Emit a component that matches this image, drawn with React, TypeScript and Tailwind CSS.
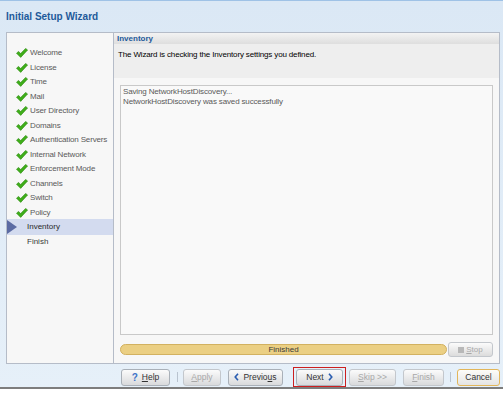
import React from "react";

const steps = [
  "Welcome",
  "License",
  "Time",
  "Mail",
  "User Directory",
  "Domains",
  "Authentication Servers",
  "Internal Network",
  "Enforcement Mode",
  "Channels",
  "Switch",
  "Policy",
];

function Check() {
  return (
    <svg width="12" height="10" viewBox="0 0 12 10" className="shrink-0">
      <path d="M0.5 5.2 L2.6 3.4 L4.6 5.6 L9.6 0.4 L11.6 2.0 L4.7 9.4 Z" fill="#3fae1a" stroke="#2b8a10" strokeWidth="0.6" />
    </svg>
  );
}

function Chevron({ left }: { left?: boolean }) {
  return (
    <svg width="5" height="8" viewBox="0 0 5 8" className="shrink-0">
      <path d={left ? "M4 0.8 L1.2 4 L4 7.2" : "M1 0.8 L3.8 4 L1 7.2"} fill="none" stroke="#2a5db0" strokeWidth="1.6" />
    </svg>
  );
}

function Btn({
  children,
  w,
  disabled,
  cancel,
}: {
  children: React.ReactNode;
  w: string;
  disabled?: boolean;
  cancel?: boolean;
}) {
  return (
    <div
      className={`${w} h-[17px] rounded-[3px] border flex items-center justify-center gap-[4px] text-[8.5px] bg-gradient-to-b ${
        cancel ? "border-[#e2b65a] from-[#fdfcf8] to-[#e4e4e4]" : "border-[#a9b0b8] from-[#fbfbfb] to-[#d9dadc]"
      } ${disabled ? "text-[#a8a8a8] border-[#c3c7cc]" : "text-[#333]"}`}
    >
      {children}
    </div>
  );
}

export default function App() {
  return (
    <div className="w-[503px] h-[399px] bg-white overflow-hidden" style={{ fontFamily: '"Liberation Sans", Arial, sans-serif' }}>
      <div className="h-[387px] border-t border-[#9fc2e6] bg-gradient-to-b from-[#dbe8f5] to-[#e6f0f9] flex flex-col">
        {/* Title */}
        <div className="h-[31px] pl-[6px] flex items-center text-[10px] font-bold text-[#1e5a9a]">Initial Setup Wizard</div>

        {/* Main panel */}
        <div className="ml-[6px] w-[494px] h-[332px] border border-[#b5bcc8] flex">
          {/* Steps */}
          <div className="w-[107px] bg-[#f7f7f7] border-r border-[#b5bcc8] pt-[13px] flex flex-col">
            {steps.map((s) => (
              <div key={s} className="h-[14.5px] flex items-center pl-[9px] gap-[2px] text-[8px] text-[#5a5a5a] whitespace-nowrap tracking-[-0.15px]">
                <Check />
                <span>{s}</span>
              </div>
            ))}
            <div className="h-[16px] -my-[0.75px] bg-[#d3dbef] flex items-center text-[8px] text-[#2a2a2a] font-medium">
              <svg width="11" height="14" viewBox="0 0 11 14" className="shrink-0">
                <path d="M0 0 L10 7 L0 14 Z" fill="#5b6ba3" />
              </svg>
              <span className="ml-[9px]">Inventory</span>
            </div>
            <div className="h-[14.5px] flex items-center pl-[20px] text-[8px] text-[#3a3a3a]">Finish</div>
          </div>

          {/* Content */}
          <div className="flex-1 flex flex-col bg-[#f7f7f7]">
            <div className="h-[11px] bg-gradient-to-b from-[#f3f3f3] to-[#dedede] pl-[3px] flex items-center text-[8px] font-bold text-[#1e5a9a]">Inventory</div>
            <div className="h-[34px] bg-[#eeeeee] pl-[4px] pt-[5px] text-[8px] text-black tracking-[-0.15px]">The Wizard is checking the Inventory settings you defined.</div>
            <div className="ml-[6px] mt-[7px] w-[373px] h-[250px] border border-[#c9c9c9] bg-[#f9f9f9] px-[2px] pt-[1px] text-[8px] leading-[9.5px] text-[#5a5a5a] tracking-[-0.15px]">
              <div>Saving NetworkHostDiscovery...</div>
              <div>NetworkHostDiscovery was saved successfully</div>
            </div>
            <div className="ml-[6px] mt-[7px] flex items-center">
              <div className="w-[327px] h-[11px] rounded-full border border-[#d2b160] bg-[#ebcf83] flex items-center justify-center text-[8px] text-[#3a3a3a]">Finished</div>
              <div className="ml-[1px] w-[45px] h-[15px] rounded-[3px] border border-[#c3c7cc] bg-gradient-to-b from-[#fbfbfb] to-[#dcdcdc] flex items-center justify-center gap-[2px] text-[8px] text-[#a8a8a8]">
                <span className="w-[6px] h-[6px] bg-[#b8b8b8]" />
                <span><u>S</u>top</span>
              </div>
            </div>
          </div>
        </div>

        {/* Buttons */}
        <div className="mt-[3px] pl-[121px] flex items-center h-[20px]">
          <Btn w="w-[49px]">
            <span className="text-[#3f74c8] font-bold text-[10px]">?</span>
            <span><u>H</u>elp</span>
          </Btn>
          <div className="ml-[7px] w-px h-[10px] bg-[#b9c3cf]" />
          <div className="ml-[5px]">
            <Btn w="w-[38px]" disabled>
              <span><u>A</u>pply</span>
            </Btn>
          </div>
          <div className="ml-[7px]">
            <Btn w="w-[55px]">
              <Chevron left />
              <span>Previo<u>u</u>s</span>
            </Btn>
          </div>
          <div className="ml-[10px] w-[53px] h-[20px] border border-[#cc1f1f] flex items-center justify-center">
            <Btn w="w-[47px]">
              <span>Next</span>
              <Chevron />
            </Btn>
          </div>
          <div className="ml-[3px]">
            <Btn w="w-[47px]" disabled>
              <span><u>S</u>kip &gt;&gt;</span>
            </Btn>
          </div>
          <div className="ml-[7px]">
            <Btn w="w-[41px]" disabled>
              <span><u>F</u>inish</span>
            </Btn>
          </div>
          <div className="ml-[6px] w-px h-[10px] bg-[#b9c3cf]" />
          <div className="ml-[6px]">
            <Btn w="w-[43px]" cancel>
              <span>Cancel</span>
            </Btn>
          </div>
        </div>
      </div>
      <div className="h-[2px] bg-[#7d7d7d]" />
    </div>
  );
}
